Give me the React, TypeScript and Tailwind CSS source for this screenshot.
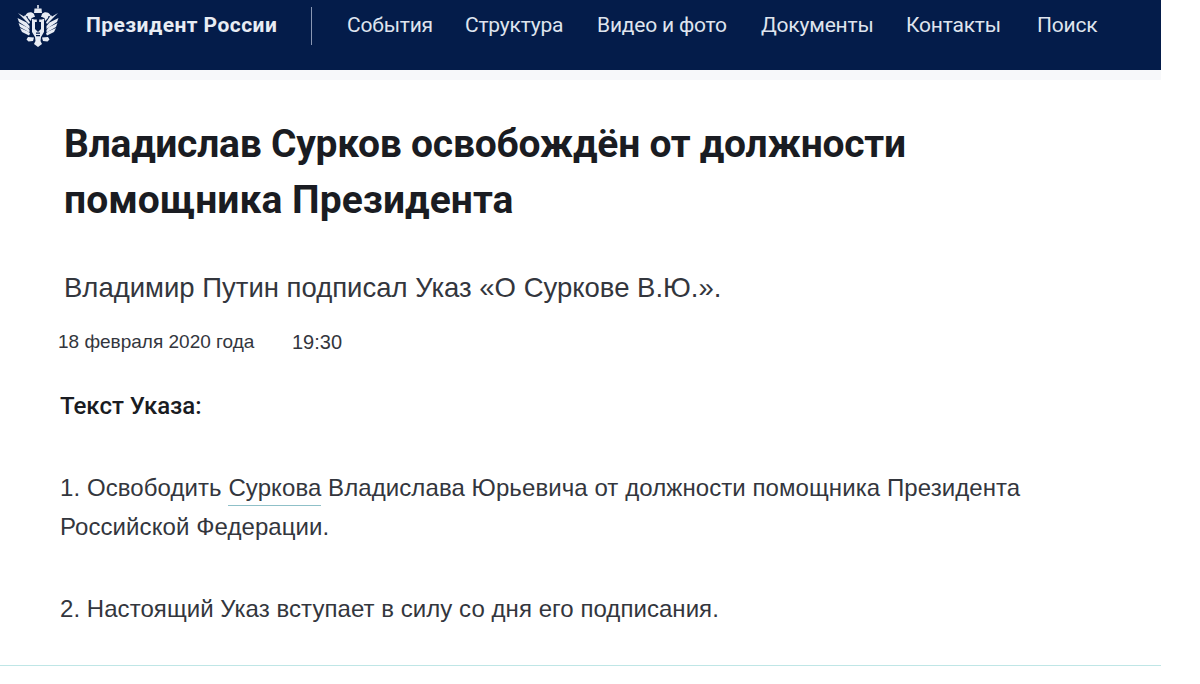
const Eagle = () => (
  <svg viewBox="0 0 44 44" className="w-[44px] h-[44px] shrink-0" fill="#e8ecf4">
    {/* crown */}
    <path d="M18.500 4.500h7l.5 4.500h-8z" />
    <path d="M21.200 1h1.600v3.500h-1.600z" />
    {/* heads */}
    <path d="M10 10.500c2-3 6-3 8-.5l1 3-3.500 1-.5 3-3-3-.5-2-2.500.5z" />
    <path d="M34 10.500c-2-3-6-3-8-.5l-1 3 3.500 1 .5 3 3-3 .5-2 2.500.5z" />
    {/* left wing feathers */}
    <path d="M2 9l6 3.500 1-1.500 5 7.500-1 1.500z" />
    <path d="M1.500 14l9 4.500 3 3.500v3L3 18z" />
    <path d="M2.500 19l9 4.500 2 2.500v2.500L4 23z" />
    <path d="M4 24l8 3.500 2 2-1 2L6 28z" />
    {/* right wing feathers */}
    <path d="M42 9l-6 3.500-1-1.500-5 7.500 1 1.500z" />
    <path d="M42.500 14l-9 4.500-3 3.500v3l10.500-7z" />
    <path d="M41.500 19l-9 4.500-2 2.500v2.500l9.500-5.500z" />
    <path d="M40 24l-8 3.500-2 2 1 2 7-3.500z" />
    {/* shield and tail */}
    <path d="M16 15h12v13l-3 5h-6l-3-5z" />
    <path d="M19 33h6l-.5 4 1.500 3-4 3-4-3 1.500-3z" />
    {/* legs */}
    <path d="M12 33l6 .5-1 3.500-4.500.5-2-2z" />
    <path d="M32 33l-6 .5 1 3.500 4.500.5 2-2z" />
    <path d="M19 18h6v7l-3 3-3-3z" fill="#041c4a" />
    <path d="M17.500 13h9v2.500h-3.300V22h-2.400v-6.500h-3.300z" fill="#041c4a" />
    <path d="M20 28.500h4v1.300h-4zM20 31h4v1.300h-4z" fill="#041c4a" />
  </svg>
)

export default function App() {
  const nav = [
    { label: 'События', w: 'w-[118px]' },
    { label: 'Структура', w: 'w-[132px]' },
    { label: 'Видео и фото', w: 'w-[164px]' },
    { label: 'Документы', w: 'w-[145px]' },
    { label: 'Контакты', w: 'w-[131px]' },
    { label: 'Поиск', w: 'w-auto' },
  ]

  return (
    <div className="w-[1200px] h-[684px] bg-white overflow-hidden font-['Roboto',sans-serif]">
      <header className="w-[1161px] h-[70px] bg-[#041c4a] flex items-center pl-[16px] pb-[18px]">
        <Eagle />
        <span className="ml-[26px] w-[191px] whitespace-nowrap text-[#e8ecf4] font-bold text-[21px] tracking-[0.45px]">Президент России</span>
        <div className="ml-[34px] w-px h-[38px] bg-[#8a97b3]" />
        <nav className="ml-[35px] flex items-center">
          {nav.map((item) => (
            <a key={item.label} className={`${item.w} whitespace-nowrap text-[#dfe4ee] text-[21px] tracking-[-0.2px]`}>
              {item.label}
            </a>
          ))}
        </nav>
      </header>

      <main className="w-[1161px] h-[596px] bg-white border-b border-[#bfe6e6] pl-[60px] font-['Liberation_Sans',sans-serif]">
        <div className="h-[10px] -ml-[60px] bg-[#f7f8fa]" />
        <h1 className="pt-[36px] pl-[4px] font-['Roboto',sans-serif] font-bold text-[39px] leading-[56px] text-[#1a1c22] tracking-[-0.25px]">
          Владислав Сурков освобождён от должности
          <br />
          <span className="tracking-[0.05px]">помощника Президента</span>
        </h1>
        <p className="mt-[42px] pl-[4px] text-[27.500px] leading-[36px] text-[#33363d]">
          Владимир Путин подписал Указ «О Суркове В.Ю.».
        </p>
        <div className="mt-[23px] -ml-[2px] flex text-[19px] leading-[26px] text-[#33363d]">
          <span className="w-[234px]">18 февраля 2020 года</span>
          <span className="text-[20px]">19:30</span>
        </div>
        <p className="mt-[36px] font-['Roboto',sans-serif] font-medium text-[24px] leading-[30px] text-[#1a1c22]">Текст Указа:</p>
        <p className="mt-[47px] text-[24px] leading-[39px] text-[#33363d] w-[1000px] tracking-[0.08px]">
          1. Освободить <a className="border-b border-[#8fc0c8] pb-[4px]">Суркова</a> Владислава Юрьевича от должности помощника Президента
          <br />
          Российской Федерации.
        </p>
        <p className="mt-[43px] text-[24px] leading-[39px] text-[#33363d] tracking-[0.05px]">
          2. Настоящий Указ вступает в силу со дня его подписания.
        </p>
      </main>
    </div>
  )
}
